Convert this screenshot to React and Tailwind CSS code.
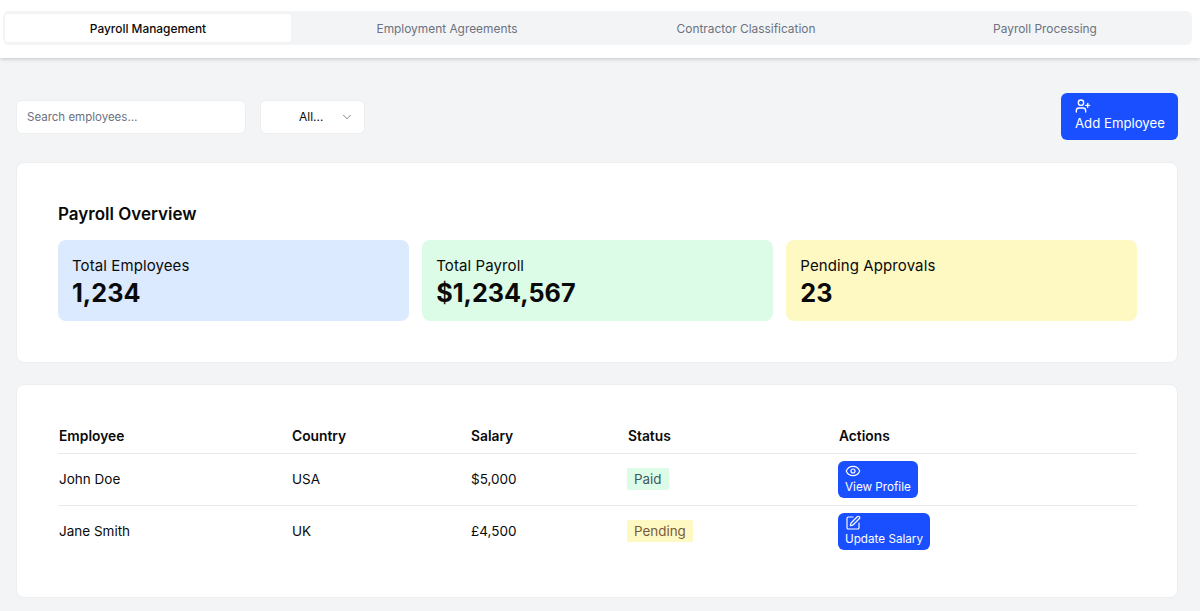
import React from 'react';
import { UserPlus, Eye, SquarePen, ChevronDown } from 'lucide-react';

const tabs = ['Payroll Management', 'Employment Agreements', 'Contractor Classification', 'Payroll Processing'];

const stats = [
  { label: 'Total Employees', value: '1,234', bg: 'bg-[#dbeafe]' },
  { label: 'Total Payroll', value: '$1,234,567', bg: 'bg-[#dcfce7]' },
  { label: 'Pending Approvals', value: '23', bg: 'bg-[#fef9c3]' },
];

const rows = [
  { name: 'John Doe', country: 'USA', salary: '$5,000', status: 'Paid', badge: 'bg-[#dcfce7] text-[#3f5560]', action: 'View Profile', Icon: Eye },
  { name: 'Jane Smith', country: 'UK', salary: '£4,500', status: 'Pending', badge: 'bg-[#fef9c3] text-[#7a5a3a]', action: 'Update Salary', Icon: SquarePen },
];

export default function App() {
  return (
    <div className="h-[611px] overflow-hidden bg-[#f3f4f6] font-['Inter',sans-serif] text-[#0a0a0a]">
      <header className="h-[58px] bg-white pt-[11px] pl-[3px] pr-[8px] shadow-[0_1px_4px_rgba(0,0,0,0.2)]">
        <div className="flex h-[34px] gap-[13px] rounded-md bg-[#f3f4f6] p-[3px_2px]">
          {tabs.map((tab, i) => (
            <div
              key={tab}
              className={`flex w-[286px] items-center justify-center rounded-[3px] pt-[2px] text-[11.9px] ${i === 0 ? 'bg-white font-medium text-[#0a0a0a]' : 'font-normal text-[#6b7280]'}`}
            >
              {tab}
            </div>
          ))}
        </div>
      </header>

      <main className="pl-4 pr-[22px] pt-[35px]">
        <div className="flex items-center justify-between">
          <div className="flex items-center gap-[14px]">
            <div className="flex h-[34px] w-[230px] items-center rounded-md border border-[#eceef0] bg-white px-[10px] pt-[2px] text-[11.5px] text-[#6b7280]">
              Search employees…
            </div>
            <div className="flex h-[34px] w-[105px] items-center rounded-md border border-[#eceef0] bg-white pl-[38px] text-[12px]">
              <span className="w-[41px]">All…</span>
              <ChevronDown size={14} strokeWidth={1.5} className="text-[#6b7280]" />
            </div>
          </div>
          <button className="flex h-[47px] w-[117px] flex-col items-start justify-center rounded-md bg-[#1a4fff] pb-[3px] pl-[14px] text-[13.2px] leading-[18px] text-white">
            <UserPlus size={16} />
            Add Employee
          </button>
        </div>

        <section className="mt-[22px] h-[201px] rounded-lg border border-[#eceef0] bg-white pl-[41px] pr-[40px] pt-[40px]">
          <h2 className="text-[17px] font-semibold leading-[22px]">Payroll Overview</h2>
          <div className="mt-[15px] flex gap-[13.5px]">
            {stats.map(s => (
              <div key={s.label} className={`h-[81px] flex-1 rounded-lg px-[14px] pt-[16px] ${s.bg}`}>
                <div className="text-[15px] font-normal leading-[20px] tracking-[0.1px]">{s.label}</div>
                <div className="text-[25.2px] font-bold leading-[34px]">{s.value}</div>
              </div>
            ))}
          </div>
        </section>

        <section className="mt-[21px] h-[214px] rounded-lg border border-[#eceef0] bg-white pl-[41px] pr-[40px] pt-[33px]">
          <table className="w-full table-fixed border-collapse text-left text-[13.5px]">
            <colgroup>
              <col className="w-[233px]" />
              <col className="w-[179px]" />
              <col className="w-[157px]" />
              <col className="w-[211px]" />
              <col />
            </colgroup>
            <thead>
              <tr className="h-[35px] border-b border-[#e9eaec] text-[13.8px]">
                <th className="pl-px pt-[3px] font-semibold">Employee</th>
                <th className="pl-px pt-[3px] font-semibold">Country</th>
                <th className="pl-px pt-[3px] font-semibold">Salary</th>
                <th className="pl-px pt-[3px] font-semibold">Status</th>
                <th className="pl-px pt-[3px] font-semibold">Actions</th>
              </tr>
            </thead>
            <tbody>
              {rows.map(r => (
                <tr key={r.name} className="h-[52px] border-b border-[#e9eaec] last:border-b-0">
                  <td className="pl-px">{r.name}</td>
                  <td className="pl-px">{r.country}</td>
                  <td className="pl-px">{r.salary}</td>
                  <td>
                    <span className={`inline-block rounded-[2px] px-[7px] py-[2px] text-[13.4px] leading-[18px] ${r.badge}`}>{r.status}</span>
                  </td>
                  <td>
                    <button className="flex h-[37px] flex-col items-start justify-center rounded-md bg-[#1a4fff] px-[7px] text-[11.7px] leading-[16px] text-white">
                      <r.Icon size={16} strokeWidth={1.75} />
                      {r.action}
                    </button>
                  </td>
                </tr>
              ))}
            </tbody>
          </table>
        </section>
      </main>
    </div>
  );
}
